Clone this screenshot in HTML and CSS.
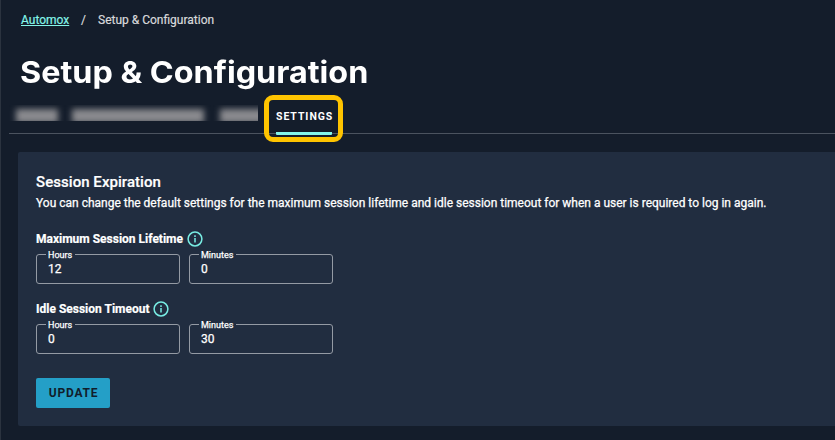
FILE: index.html
```html
<!DOCTYPE html>
<html lang="en">
<head>
<meta charset="utf-8">
<title>Setup &amp; Configuration</title>
<link rel="stylesheet" href="styles.css">
</head>
<body>
<main class="page">
  <nav class="breadcrumb">
    <a class="breadcrumb-link" href="#">Automox</a>
    <span class="breadcrumb-slash">/</span>
    <span class="breadcrumb-current">Setup &amp; Configuration</span>
  </nav>
  <h1 class="title">Setup &amp; Configuration</h1>
  <div class="tabs">
    <div class="redacted">
      <span class="smudge smudge-short"></span>
      <span class="smudge smudge-long"></span>
      <span class="smudge smudge-end"></span>
    </div>
    <a class="tab" href="#">SETTINGS</a>
  </div>
  <section class="panel">
    <h2 class="panel-title">Session Expiration</h2>
    <p class="panel-text">You can change the default settings for the maximum session lifetime and idle session timeout for when a user is required to log in again.</p>
    <div class="group">
      <h3 class="group-label"><span>Maximum Session Lifetime</span>
        <svg class="info" viewBox="0 0 16 16"><circle cx="8" cy="8" r="6.9"/><path d="M8 7v4.6M8 4.3v1.6"/></svg>
      </h3>
      <div class="fields">
        <fieldset class="field"><legend>Hours</legend><span>12</span></fieldset>
        <fieldset class="field"><legend>Minutes</legend><span>0</span></fieldset>
      </div>
    </div>
    <div class="group">
      <h3 class="group-label group-label-tight"><span>Idle Session Timeout</span>
        <svg class="info" viewBox="0 0 16 16"><circle cx="8" cy="8" r="6.9"/><path d="M8 7v4.6M8 4.3v1.6"/></svg>
      </h3>
      <div class="fields">
        <fieldset class="field"><legend>Hours</legend><span>0</span></fieldset>
        <fieldset class="field"><legend>Minutes</legend><span>30</span></fieldset>
      </div>
    </div>
    <button class="update">UPDATE</button>
  </section>
</main>
</body>
</html>
```
FILE: styles.css
```css
* { box-sizing: border-box; }
body {
  margin: 0;
  background: #141d2b;
  color: #fff;
  font-family: Roboto, sans-serif;
  overflow: hidden;
}
.page {
  height: 440px;
  border-left: 1px solid #2b333f;
}
.breadcrumb {
  display: flex;
  height: 40px;
  padding: 12px 0 0 20px;
  font-size: 12px;
  line-height: 16px;
  color: #d8d9db;
  white-space: nowrap;
  -webkit-text-stroke: 0.2px;
}
.breadcrumb-link {
  width: 48px;
  color: #84f5e9;
  text-decoration: underline;
  text-underline-offset: 1px;
}
.breadcrumb-slash { margin: 0 12px; width: 5px; }
.title {
  width: 400px;
  margin: 0 0 0 19px;
  height: 64px;
  padding: 14px 0 0;
  font: 700 30px/36px Inter, sans-serif;
  transform: scaleX(1.078);
  transform-origin: left top;
  white-space: nowrap;
}
.tabs {
  display: flex;
  height: 30px;
  margin-left: 8px;
  border-bottom: 1px solid #4b535f;
}
.redacted {
  display: flex;
  width: 249px;
  height: 16px;
  margin-top: 1px;
  padding-left: 7px;
  overflow: hidden;
}
.smudge {
  flex: none;
  height: 14px;
  margin-top: 4px;
  background: #8b8b8f;
  filter: blur(3px);
}
.smudge-short { width: 42px; margin-right: 14px; }
.smudge-long { width: 132px; margin-right: 16px; }
.smudge-end { width: 48px; }
.tab {
  position: relative;
  width: 56px;
  height: 31px;
  margin-left: 18px;
  border-bottom: 3px solid #84f5e9;
  border-radius: 1px;
  color: #fff;
  font-size: 10.5px;
  font-weight: 700;
  line-height: 25px;
  letter-spacing: 0.95px;
  text-decoration: none;
  white-space: nowrap;
}
.tab::after {
  content: "";
  position: absolute;
  inset: -9px -11px -10px -12px;
  border: 5px solid #ffc400;
  border-radius: 9px;
}
.panel {
  height: 274px;
  margin: 18px 0 0 17px;
  padding: 21px 0 0 18px;
  background: #212d40;
  border-radius: 2px 0 0 2px;
}
.panel-title {
  margin: 0;
  font-size: 15px;
  font-weight: 500;
  line-height: 18px;
  letter-spacing: 0.05px;
  -webkit-text-stroke: 0.2px;
}
.panel-text {
  margin: 4px 0 20px;
  font-size: 12px;
  line-height: 16px;
  letter-spacing: -0.005px;
  white-space: nowrap;
  -webkit-text-stroke: 0.25px;
}
.group { height: 70px; }
.group-label {
  display: flex;
  align-items: center;
  gap: 4px;
  height: 16px;
  margin: 0 0 2px;
  font-size: 12px;
  font-weight: 700;
  line-height: 16px;
  white-space: nowrap;
  -webkit-text-stroke: 0.2px;
}
.group-label-tight { gap: 3px; }
.info {
  width: 16px;
  height: 16px;
  fill: none;
  stroke: #78ece3;
  stroke-width: 1.5;
}
.fields { display: flex; gap: 9px; }
.field {
  width: 144px;
  height: 35px;
  min-width: 0;
  margin: 0;
  padding: 1px 9px 0;
  border: 1px solid #949aa4;
  border-radius: 3px;
  font-size: 12px;
  line-height: 16px;
  -webkit-text-stroke: 0.25px;
}
.field legend {
  height: 10px;
  padding: 0 3px 0 2px;
  font-size: 9px;
  line-height: 12px;
}
.field span { display: block; padding: 1px 0 0 2px; }
.update {
  display: block;
  width: 74px;
  height: 30px;
  margin-top: 7px;
  padding: 0 0 0 1px;
  border: 0;
  border-radius: 2px;
  background: #249fc7;
  color: #111d2b;
  font: 700 12px/30px Roboto, sans-serif;
  letter-spacing: 0.8px;
}
```
